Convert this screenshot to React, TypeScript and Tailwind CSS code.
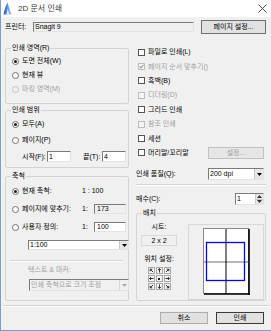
import clsx from "clsx";
import type { ReactNode } from "react";

// classic sunken edit border
const sunken =
  "border border-t-[#7a7a7a] border-l-[#7a7a7a] border-r-[#e3e3e3] border-b-[#e3e3e3]";

function Radio({ checked, disabled }: { checked?: boolean; disabled?: boolean }) {
  return (
    <span
      className={clsx(
        "w-[7px] h-[7px] rounded-full border flex items-center justify-center shrink-0",
        disabled ? "border-[#c4c4c4] bg-[#f0f0f0]" : "border-[#707070] bg-white",
      )}
    >
      {checked && <span className="w-[3px] h-[3px] rounded-full bg-[#1a1a1a]" />}
    </span>
  );
}

function Check({ checked, disabled }: { checked?: boolean; disabled?: boolean }) {
  return (
    <span
      className={clsx(
        "w-[7px] h-[7px] border flex items-center justify-center shrink-0",
        disabled ? "border-[#bdbdbd] bg-[#f4f4f4]" : "border-[#555555] bg-white",
      )}
    >
      {checked && (
        <svg width="5" height="5" viewBox="0 0 5 5">
          <path
            d="M0.6 2.4 L2 3.9 L4.5 0.8"
            stroke={disabled ? "#a0a0a0" : "#000"}
            strokeWidth="1.1"
            fill="none"
          />
        </svg>
      )}
    </span>
  );
}

function DropArrow({ disabled }: { disabled?: boolean }) {
  return (
    <span
      className={clsx(
        "w-[9px] shrink-0 flex items-center justify-center border-l",
        disabled ? "border-[#d8d8d8] bg-[#f0f0f0]" : "border-[#c8c8c8] bg-[#e6e6e6]",
      )}
    >
      <svg width="5" height="3" viewBox="0 0 5 3">
        <path d="M0 0 H5 L2.5 3 Z" fill={disabled ? "#a8a8a8" : "#000"} />
      </svg>
    </span>
  );
}

function Select({
  value,
  disabled,
  className,
}: {
  value: string;
  disabled?: boolean;
  className?: string;
}) {
  return (
    <div
      className={clsx(
        "flex items-stretch",
        sunken,
        disabled ? "bg-[#f0f0f0] text-[#a0a0a0]" : "bg-white",
        className,
      )}
    >
      <span className="flex-1 pl-[1px] flex items-center whitespace-nowrap overflow-hidden">
        {value}
      </span>
      <DropArrow disabled={disabled} />
    </div>
  );
}

function Group({
  title,
  className,
  children,
}: {
  title: string;
  className?: string;
  children: ReactNode;
}) {
  return (
    <fieldset className={clsx("border border-[#d3d3d3] rounded-[2px] min-w-0", className)}>
      <legend className="ml-[5px] px-[1px] leading-[10px]">{title}</legend>
      {children}
    </fieldset>
  );
}

function CheckRow({
  label,
  checked,
  disabled,
  children,
}: {
  label: string;
  checked?: boolean;
  disabled?: boolean;
  children?: ReactNode;
}) {
  return (
    <div className="h-[14.4px] flex items-center pl-[2px] gap-[3px]">
      <Check checked={checked} disabled={disabled} />
      <span className={clsx("whitespace-nowrap", disabled && "text-[#a0a0a0]")}>{label}</span>
      {children}
    </div>
  );
}

function Arrow({ angle }: { angle: number }) {
  return (
    <svg width="5" height="5" viewBox="0 0 5 5">
      <g transform={`rotate(${angle} 2.5 2.5)`} stroke="#222" strokeWidth="0.9" fill="none">
        <path d="M2.5 0.6 V4.6" />
        <path d="M1 2.1 L2.5 0.6 L4 2.1" />
      </g>
    </svg>
  );
}

const arrows: (number | null)[] = [-45, 0, 45, -90, null, 90, -135, 180, 135];

export default function App() {
  return (
    <div className="w-[271px] h-[331px] bg-[#f0f0f0] border-l border-b border-[#7b9dc7] flex flex-col overflow-hidden font-['Liberation_Sans','Noto_Sans_CJK_KR',sans-serif] text-[7px] leading-[10px] text-black">
      {/* title bar */}
      <div className="h-[17px] shrink-0 bg-white flex items-center pl-[2px] pr-[4px] text-[8px]">
        <svg width="9" height="13" viewBox="0 0 9 13">
          <defs>
            <linearGradient id="ic" x1="0" x2="1" y1="0" y2="0">
              <stop offset="0" stopColor="#1d55c9" />
              <stop offset="1" stopColor="#9cc9f3" />
            </linearGradient>
          </defs>
          <path d="M0.5 12.5 C1.5 7 2.8 3 4.5 0.5 C5.5 4 7 8.5 8.5 12.5 Z" fill="url(#ic)" />
          <path d="M3.4 12.5 L4.8 6.5 L6.2 12.5 Z" fill="#e8f3ff" />
        </svg>
        <span className="ml-[6px] text-[#3c3c3c]">2D 문서 인쇄</span>
        <svg className="ml-auto" width="9" height="9" viewBox="0 0 9 9">
          <path d="M0.5 0.5 L8.5 8.5 M8.5 0.5 L0.5 8.5" stroke="#333" strokeWidth="0.9" />
        </svg>
      </div>

      <div className="flex flex-col pl-[4px] pr-[5px]">
        {/* printer */}
        <div className="mt-[3px] h-[14px] flex items-center">
          <span className="w-[28px]">프린터:</span>
          <div className={clsx("w-[161px] h-[10px] bg-[#f0f0f0] pl-[1px] flex items-center", sunken)}>
            Snagit 9
          </div>
          <button className="ml-auto w-[65px] h-[14px] bg-[#e1e1e1] border border-[#707070] leading-[10px]">
            페이지 설정...
          </button>
        </div>

        <div className="mt-[9px] flex gap-[7px] items-stretch">
          {/* left column */}
          <div className="w-[124px] flex flex-col">
            <Group title="인쇄 영역(R)">
              <div className="pt-[1px] pb-[7px] pl-[6px] flex flex-col">
                <div className="h-[14px] flex items-center gap-[3px]">
                  <Radio checked />
                  <span>도면 전체(W)</span>
                </div>
                <div className="h-[14px] flex items-center gap-[3px]">
                  <Radio />
                  <span>현재 뷰</span>
                </div>
                <div className="h-[14px] flex items-center gap-[3px]">
                  <Radio disabled />
                  <span className="text-[#a0a0a0]">마킹 영역(M)</span>
                </div>
              </div>
            </Group>

            <Group title="인쇄 범위" className="mt-[1px]">
              <div className="pt-[1px] pb-[5px] pl-[6px] flex flex-col">
                <div className="h-[16px] flex items-center gap-[3px]">
                  <Radio checked />
                  <span>모두(A)</span>
                </div>
                <div className="h-[16px] flex items-center gap-[3px]">
                  <Radio />
                  <span>페이지(P)</span>
                </div>
                <div className="mt-[3px] h-[11px] flex items-center pl-[10px]">
                  <span className="w-[25px] whitespace-nowrap">시작(F):</span>
                  <div className={clsx("w-[24px] h-[11px] bg-white pl-[1px] flex items-center", sunken)}>1</div>
                  <span className="ml-[12px] w-[19px] whitespace-nowrap">끝(T):</span>
                  <div className={clsx("w-[24px] h-[11px] bg-white pl-[1px] flex items-center", sunken)}>4</div>
                </div>
              </div>
            </Group>

            <Group title="축척" className="mt-[3px] flex-1">
              <div className="pt-[1px] pl-[6px] flex flex-col">
                <div className="h-[18px] flex items-center gap-[3px]">
                  <Radio checked />
                  <span className="w-[57px] whitespace-nowrap">현재 축척:</span>
                  <span>1 : 100</span>
                </div>
                <div className="h-[18px] flex items-center gap-[3px]">
                  <Radio />
                  <span className="w-[57px] whitespace-nowrap">페이지에 맞추기:</span>
                  <span className="w-[9px]">1:</span>
                  <div className={clsx("w-[32px] h-[10px] bg-[#f0f0f0] pl-[2px] flex items-center", sunken)}>173</div>
                </div>
                <div className="h-[18px] flex items-center gap-[3px]">
                  <Radio />
                  <span className="w-[57px] whitespace-nowrap">사용자 정의:</span>
                  <span className="w-[9px]">1:</span>
                  <div className={clsx("w-[32px] h-[10px] bg-white pl-[2px] flex items-center", sunken)}>100</div>
                </div>
                <Select value="1:100" className="mt-[4px] ml-[16px] w-[101px] h-[10px]" />
                <div className="mt-[10px] mr-[5px] -ml-[2px] h-[2px] border-t border-b border-t-[#d3d3d3] border-b-white" />
                <div className="mt-[3px] h-[10px] pl-[16px] text-[#a0a0a0]">텍스트 &amp; 마커:</div>
                <Select disabled value="인쇄 축척으로 크기 조정" className="mt-[4px] ml-[17px] w-[100px] h-[12px]" />
              </div>
            </Group>
          </div>

          {/* right column */}
          <div className="w-[130px] flex flex-col pt-[2px]">
            <CheckRow label="파일로 인쇄(L)" />
            <CheckRow label="페이지 순서 맞추기()" checked disabled />
            <CheckRow label="흑백(B)" />
            <CheckRow label="디더링(D)" disabled />
            <CheckRow label="그리드 인쇄" />
            <CheckRow label="참조 인쇄" disabled />
            <CheckRow label="세션" />
            <CheckRow label="머리말/꼬리말">
              <button className="ml-auto mr-[2px] w-[56px] h-[12px] bg-[#e6e6e6] border border-[#c2c2c2] text-[#a0a0a0] leading-[10px]">
                설정...
              </button>
            </CheckRow>

            <div className="mt-[8px] h-[12px] flex items-center">
              <span>인쇄 품질(Q):</span>
              <Select value="200 dpi" className="ml-auto mr-[2px] w-[56px] h-[12px]" />
            </div>

            <div className="mt-[4px] h-[2px] border-t border-b border-t-[#d3d3d3] border-b-white" />

            <div className="mt-[7px] h-[12px] flex items-center">
              <span>매수(C):</span>
              <div className={clsx("ml-auto mr-[2px] w-[29px] h-[12px] flex items-stretch bg-white", sunken)}>
                <span className="flex-1 pl-[1px] flex items-center">1</span>
                <span className="w-[8px] flex flex-col border-l border-[#c8c8c8] bg-[#e6e6e6]">
                  <span className="flex-1 flex items-center justify-center border-b border-[#c8c8c8]">
                    <svg width="5" height="3" viewBox="0 0 5 3">
                      <path d="M0 3 H5 L2.5 0 Z" fill="#333" />
                    </svg>
                  </span>
                  <span className="flex-1 flex items-center justify-center">
                    <svg width="5" height="3" viewBox="0 0 5 3">
                      <path d="M0 0 H5 L2.5 3 Z" fill="#333" />
                    </svg>
                  </span>
                </span>
              </div>
            </div>

            <Group title="배치" className="mt-[3px] flex-1">
              <div className="flex items-start">
                <div className="ml-[4px] w-[36px] flex flex-col items-center">
                  <span className="mt-[4px] h-[10px]">시트:</span>
                  <div className="mt-[3px] w-[36px] h-[11px] border border-[#d8d8d8] flex items-center justify-center">
                    2 x 2
                  </div>
                  <span className="mt-[8px] h-[10px] whitespace-nowrap">위치 설정:</span>
                  <div className="mt-[3px] grid grid-cols-3 gap-[1px]">
                    {arrows.map((a, i) => (
                      <span
                        key={i}
                        className="w-[7px] h-[7px] border border-[#a8a8a8] bg-[#f6f6f6] flex items-center justify-center"
                      >
                        {a === null ? (
                          <span className="w-[2px] h-[2px] bg-[#222]" />
                        ) : (
                          <Arrow angle={a} />
                        )}
                      </span>
                    ))}
                  </div>
                </div>
                <div className="ml-auto mr-[1px] mt-[6px] w-[76px] h-[76px] border border-[#d8d8d8] flex justify-center">
                  <svg className="mt-[3px]" width="47" height="67" viewBox="0 0 47 67">
                    <rect x="0.5" y="0.5" width="45" height="65" fill="#fff" stroke="#8a8a8a" />
                    <path d="M46 1 V67 M1 66 H47" stroke="#000" strokeWidth="1.6" />
                    <path d="M1 34 H45.5" stroke="#6e6e6e" strokeWidth="1" />
                    <path d="M23 1 V65.5" stroke="#000" strokeWidth="1" />
                    <rect x="3.5" y="14.5" width="38" height="38" fill="none" stroke="#0000ff" strokeWidth="1.3" />
                  </svg>
                </div>
              </div>
            </Group>
          </div>
        </div>
      </div>

      <div className="mt-[4px] mx-[2px] h-[2px] border-t border-b border-t-[#d3d3d3] border-b-white" />

      <div className="mt-[5px] h-[12px] flex justify-end gap-[8px] pr-[7px]">
        <button className="w-[48px] h-[12px] bg-[#e1e1e1] border border-[#adadad] leading-[10px]">
          취소
        </button>
        <button className="w-[48px] h-[12px] bg-[#e1e1e1] border border-[#3a3a3a] leading-[10px]">
          인쇄
        </button>
      </div>
    </div>
  );
}
